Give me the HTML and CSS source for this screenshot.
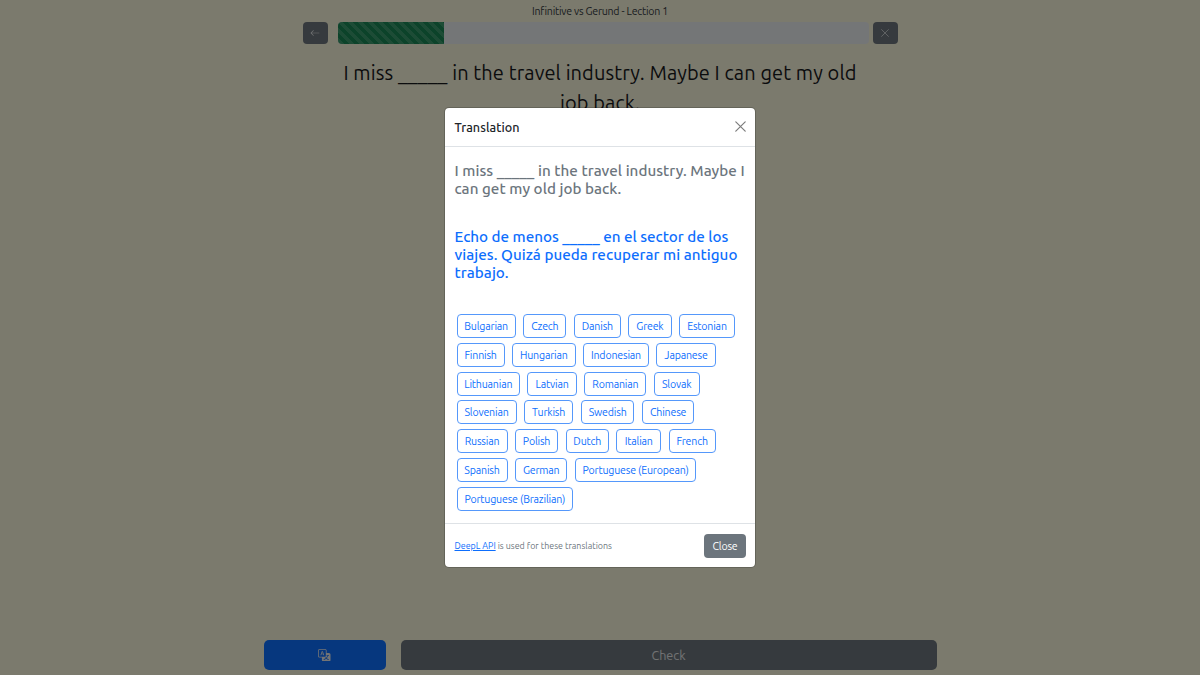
FILE: index.html
```html
<!DOCTYPE html>
<html lang="en">
<head>
<meta charset="utf-8">
<title>Infinitive vs Gerund</title>
<link rel="stylesheet" href="styles.css">
</head>
<body>
<div class="page">
  <header class="lesson">Infinitive vs Gerund - Lection 1</header>
  <div class="topbar">
    <button class="nav-btn" aria-label="Back"><svg width="10" height="10" viewBox="0 0 16 16"><path fill="currentColor" d="M15 8a.5.5 0 0 0-.5-.5H2.707l3.147-3.146a.5.5 0 1 0-.708-.708l-4 4a.5.5 0 0 0 0 .708l4 4a.5.5 0 0 0 .708-.708L2.707 8.5H14.5A.5.5 0 0 0 15 8z"/></svg></button>
    <div class="progress"><div class="bar"></div></div>
    <button class="nav-btn" aria-label="Exit"><svg width="10" height="10" viewBox="0 0 16 16"><path d="M2.5 2.5l11 11M13.5 2.5l-11 11" stroke="currentColor" stroke-width="1.1" stroke-linecap="round"/></svg></button>
  </div>
  <div class="question">I miss _____ in the travel industry. Maybe I can get my old<br>job back.</div>
  <div class="actions">
    <button class="translate" aria-label="Translate"><svg width="12.5" height="12.5" viewBox="0 0 16 16"><path d="M4.545 6.714 4.11 8H3l1.862-5h1.284L8 8H6.833l-.435-1.286H4.545zm1.634-.736L5.5 3.956h-.049l-.679 2.022H6.18z"/><path d="M0 2a2 2 0 0 1 2-2h7a2 2 0 0 1 2 2v3h3a2 2 0 0 1 2 2v7a2 2 0 0 1-2 2H7a2 2 0 0 1-2-2v-3H2a2 2 0 0 1-2-2V2zm2-1a1 1 0 0 0-1 1v7a1 1 0 0 0 1 1h7a1 1 0 0 0 1-1V2a1 1 0 0 0-1-1H2zm7.138 9.995c.193.301.402.583.63.846-.748.575-1.673 1.001-2.768 1.292.178.217.451.635.555.867 1.125-.359 2.08-.844 2.886-1.494.777.665 1.739 1.165 2.93 1.472.133-.254.414-.673.629-.89-1.125-.253-2.057-.694-2.82-1.284.681-.747 1.222-1.651 1.621-2.757H14V8h-3v1.047h.765c-.318.844-.74 1.546-1.272 2.13a6.066 6.066 0 0 1-.415-.492 1.988 1.988 0 0 1-.94.31z"/></svg></button>
    <button class="check"><span>Check</span></button>
  </div>
</div>
<div class="backdrop">
  <section class="modal" role="dialog" aria-label="Translation">
    <div class="modal-head">
      <h5>Translation</h5>
      <svg width="11" height="11" viewBox="0 0 11 11"><path d="M.8.8l9.4 9.4M10.2.8L.8 10.2" stroke="#7c7c7c" stroke-width="1.2" stroke-linecap="round"/></svg>
    </div>
    <div class="modal-body">
      <div class="source">I miss _____ in the travel industry. Maybe I<br>can get my old job back.</div>
      <div class="target"><span class="line1">Echo de menos _____ en el sector de los</span><br>viajes. Quizá pueda recuperar mi antiguo<br>trabajo.</div>
      <div class="languages">
        <div class="row"><button class="w59">Bulgarian</button><button class="w43">Czech</button><button class="w47">Danish</button><button class="w43">Greek</button><button class="w56">Estonian</button></div>
        <div class="row"><button class="w48">Finnish</button><button class="w63">Hungarian</button><button class="w66">Indonesian</button><button class="w59">Japanese</button></div>
        <div class="row"><button class="w63">Lithuanian</button><button class="w49">Latvian</button><button class="w62">Romanian</button><button class="w46">Slovak</button></div>
        <div class="row"><button class="w60">Slovenian</button><button class="w49">Turkish</button><button class="w53">Swedish</button><button class="w52">Chinese</button></div>
        <div class="row"><button class="w51">Russian</button><button class="w43">Polish</button><button class="w43">Dutch</button><button class="w45">Italian</button><button class="w47">French</button></div>
        <div class="row"><button class="w51">Spanish</button><button class="w52">German</button><button class="w121">Portuguese (European)</button></div>
        <div class="row"><button class="w116">Portuguese (Brazilian)</button></div>
      </div>
    </div>
    <div class="modal-foot">
      <p><a>DeepL API</a><span> is used for these translations</span></p>
      <button class="close">Close</button>
    </div>
  </section>
</div>
</body>
</html>
```
FILE: styles.css
```css
* { box-sizing: border-box; }
body { margin: 0; height: 675px; overflow: hidden; background: #f7f4db; color: #212529; font-family: Ubuntu, "Noto Sans", sans-serif; }
button { font-family: inherit; border: 0; margin: 0; padding: 0; display: flex; align-items: center; justify-content: center; white-space: nowrap; }
svg { display: block; fill: none; }
.page { height: 675px; display: flex; flex-direction: column; align-items: center; }
.lesson { height: 22px; line-height: 22px; font-size: 10.6px; letter-spacing: -.23px; color: #343a40; }
.topbar { width: 595px; display: flex; height: 22px; }
.nav-btn { width: 25px; height: 22px; border-radius: 4px; background: #6c757d; color: #e4e6e8; }
.progress { width: 531px; margin: 0 4px 0 10px; height: 22px; border-radius: 4px; overflow: hidden; background: #e9ecef; }
.bar { height: 22px; width: 106px; background: #198754 linear-gradient(45deg, rgba(255,255,255,.15) 25%, transparent 25%, transparent 50%, rgba(255,255,255,.15) 50%, rgba(255,255,255,.15) 75%, transparent 75%) 0 0 / 10px 10px; }
.question { flex: 1; padding-top: 14px; font-size: 20px; letter-spacing: .1px; line-height: 30px; text-align: center; white-space: nowrap; color: #16181b; }
.actions { display: flex; gap: 15px; width: 673px; height: 35px; }
.translate { width: 122px; height: 30px; border-radius: 5px; background: #0d6efd; color: #e9e9e9; }
.translate svg { fill: currentColor; }
.check { flex: 1; height: 30px; border-radius: 5px; background: #6c757d; color: #e4e6e8; font-size: 12.6px; }
.backdrop { position: absolute; inset: 0; background: rgba(0,0,0,.5); display: flex; justify-content: center; align-items: center; }
.modal { width: 312px; height: 461px; background: #fff; border: 1px solid rgba(0,0,0,.18); background-clip: padding-box; border-radius: 5px; }
.modal-head { height: 39px; padding: 0 9px 1px 9.5px; display: flex; justify-content: space-between; align-items: center; border-bottom: 1px solid #dee2e6; }
h5 { margin: 0; font-size: 12.6px; font-weight: 500; letter-spacing: .05px; }
.modal-body { height: 376px; padding: 15px 0 0 9.5px; font-size: 15.2px; letter-spacing: .03px; font-weight: 500; line-height: 18px; white-space: nowrap; }
.source { color: #6c757d; height: 66px; }
.target { color: #0d6efd; height: 86px; }
.line1 { letter-spacing: -.02px; }
.languages { display: flex; flex-direction: column; gap: 4.8px; padding-left: 2px; }
.row { display: flex; gap: 7.4px; height: 24px; }
.row button { height: 24px; border: 1px solid #5598fb; border-radius: 4px; background: #fff; color: #0d6efd; font-size: 10.6px; letter-spacing: -.17px; }
.w43 { width: 43.3px; } .w45 { width: 45px; } .w46 { width: 46px; } .w47 { width: 47px; } .w48 { width: 48.2px; }
.w49 { width: 49.5px; } .w51 { width: 51px; } .w52 { width: 52.5px; } .w53 { width: 53.7px; } .w56 { width: 56px; }
.w59 { width: 59.3px; } .w60 { width: 60px; } .w62 { width: 62px; } .w63 { width: 63.5px; } .w66 { width: 66px; }
.w116 { width: 116.5px; } .w121 { width: 121.5px; }
.modal-foot { height: 44px; border-top: 1px solid #dee2e6; padding: 0 9px 0 9.5px; display: flex; align-items: center; justify-content: space-between; }
.modal-foot p { margin: 0; font-size: 8.9px; color: #6c757d; white-space: pre; }
.modal-foot a { color: #0d6efd; text-decoration: underline; }
.close { width: 42px; height: 24px; border-radius: 4px; background: #6c757d; color: #fff; font-size: 10.6px; letter-spacing: -.17px; }
```
